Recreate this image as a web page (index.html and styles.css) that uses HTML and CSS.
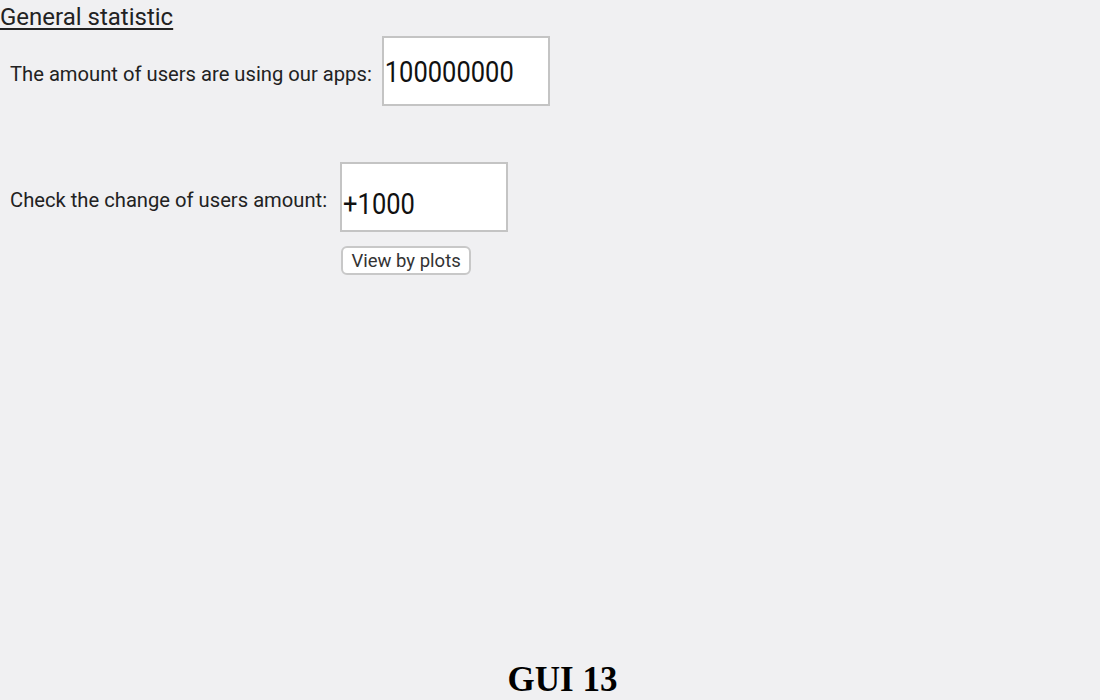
FILE: index.html
```html
<!DOCTYPE html>
<html>
<head>
<meta charset="utf-8">
<link rel="stylesheet" href="styles.css">
</head>
<body>
<div class="page">
  <main class="content">
    <h1 class="title">General statistic</h1>
    <div class="row row-total">
      <span class="label">The amount of users are using our apps:</span>
      <div class="box box-total"><span class="value">100000000</span></div>
    </div>
    <div class="row row-change">
      <span class="label">Check the change of users amount:</span>
      <div class="field-col">
        <div class="box box-change"><span class="value">+1000</span></div>
        <button class="btn">View by plots</button>
      </div>
    </div>
  </main>
  <footer class="caption">GUI 13</footer>
</div>
</body>
</html>
```
FILE: styles.css
```css
html, body {
  margin: 0;
  padding: 0;
  background: #f0f0f2;
}
.page {
  width: 1100px;
  height: 700px;
  display: flex;
  flex-direction: column;
  font-family: Roboto, "Liberation Sans", sans-serif;
  color: #222;
}
.content {
  flex: 1;
}
.title {
  margin: 0;
  padding-top: 3px;
  font-size: 24px;
  font-weight: 400;
  line-height: 28px;
  text-decoration: underline;
  text-decoration-thickness: 1.5px;
  text-underline-offset: 3px;
  color: #222;
  display: inline-block;
  vertical-align: top;
}
.row {
  display: flex;
  align-items: flex-start;
  padding-left: 10px;
}
.row-total {
  margin-top: 5px;
  gap: 10px;
}
.row-total .label {
  margin-top: 27px;
}
.row-change {
  margin-top: 56px;
  gap: 13px;
}
.row-change .label {
  margin-top: 27px;
}
.label {
  font-size: 20.2px;
  line-height: 22px;
}
.box {
  background: #fff;
  border: 2px solid #c4c4c4;
  box-sizing: border-box;
  width: 168px;
  height: 70px;
  font-size: 25.5px;
  line-height: 26px;
  color: #111;
  padding-left: 1px;
}
.value {
  display: inline-block;
  transform: scaleY(1.15);
}
.box-total {
  padding-top: 21px;
}
.box-change {
  padding-top: 27px;
}
.field-col {
  display: flex;
  flex-direction: column;
  align-items: flex-start;
  gap: 14px;
}
.btn {
  font-family: Roboto, "Liberation Sans", sans-serif;
  font-size: 18.5px;
  color: #333;
  background: #fff;
  border: 2px solid #c8c8c8;
  border-radius: 6px;
  box-sizing: border-box;
  height: 29px;
  width: 130px;
  padding: 2px 0 1px;
  line-height: 22px;
  margin-left: 1px;
}
.caption {
  text-align: center;
  padding-left: 25px;
  font-family: "Liberation Serif", serif;
  font-weight: 700;
  font-size: 35px;
  line-height: 40px;
  color: #000;
  height: 40px;
}
```
